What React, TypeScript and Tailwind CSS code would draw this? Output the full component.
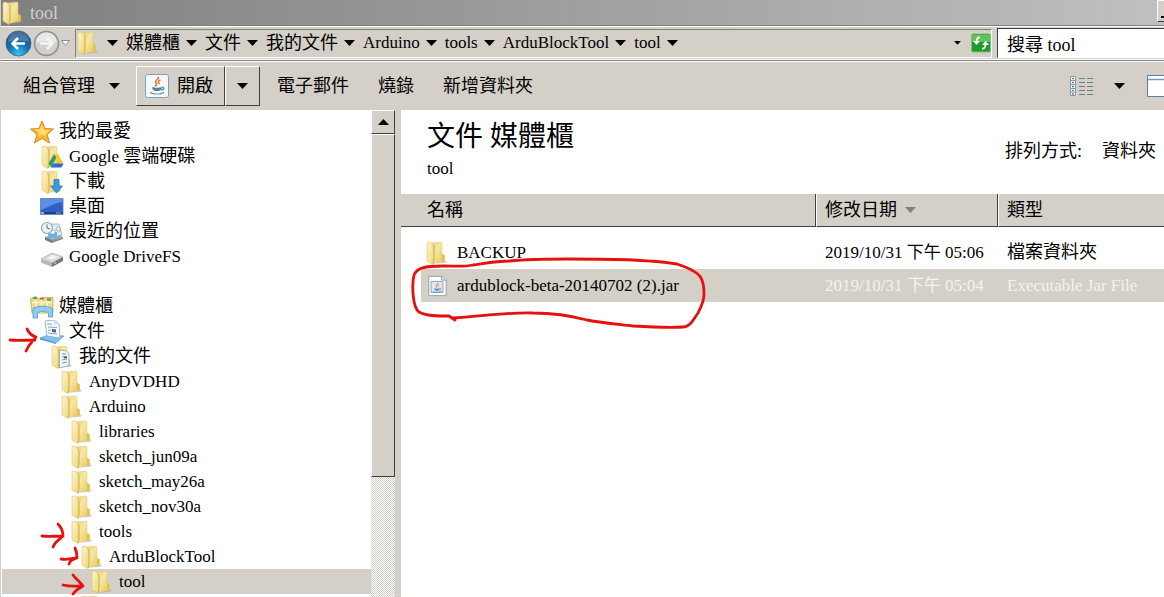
import { useState } from 'react';
import type { ReactNode } from 'react';

type IconName = 'star' | 'gdrive' | 'download' | 'desktop' | 'recent' | 'drive' | 'library' | 'documents' | 'mydocs' | 'folder';

interface TreeNode {
    id: string;
    name: string;
    icon: IconName;
    level: number;
}

interface FileRow {
    name: string;
    modified: string;
    type: string;
    isFolder: boolean;
}

const favorites: TreeNode[] = [
    { id: 'fav', name: '我的最愛', icon: 'star', level: 0 },
    { id: 'gdrive', name: 'Google 雲端硬碟', icon: 'gdrive', level: 1 },
    { id: 'downloads', name: '下載', icon: 'download', level: 1 },
    { id: 'desktop', name: '桌面', icon: 'desktop', level: 1 },
    { id: 'recent', name: '最近的位置', icon: 'recent', level: 1 },
    { id: 'drivefs', name: 'Google DriveFS', icon: 'drive', level: 1 },
];

const libraries: TreeNode[] = [
    { id: 'lib', name: '媒體櫃', icon: 'library', level: 0 },
    { id: 'docs', name: '文件', icon: 'documents', level: 1 },
    { id: 'mydocs', name: '我的文件', icon: 'mydocs', level: 2 },
    { id: 'anydvd', name: 'AnyDVDHD', icon: 'folder', level: 3 },
    { id: 'arduino', name: 'Arduino', icon: 'folder', level: 3 },
    { id: 'libraries', name: 'libraries', icon: 'folder', level: 4 },
    { id: 'jun09a', name: 'sketch_jun09a', icon: 'folder', level: 4 },
    { id: 'may26a', name: 'sketch_may26a', icon: 'folder', level: 4 },
    { id: 'nov30a', name: 'sketch_nov30a', icon: 'folder', level: 4 },
    { id: 'tools', name: 'tools', icon: 'folder', level: 4 },
    { id: 'ablock', name: 'ArduBlockTool', icon: 'folder', level: 5 },
    { id: 'tool', name: 'tool', icon: 'folder', level: 6 },
    { id: 'more', name: '', icon: 'folder', level: 5 },
];

const crumbs = ['媒體櫃', '文件', '我的文件', 'Arduino', 'tools', 'ArduBlockTool', 'tool'];

const files: FileRow[] = [
    { name: 'BACKUP', modified: '2019/10/31 下午 05:06', type: '檔案資料夾', isFolder: true },
    { name: 'ardublock-beta-20140702 (2).jar', modified: '2019/10/31 下午 05:04', type: 'Executable Jar File', isFolder: false },
];

const indent = ['pl-7', 'pl-[38px]', 'pl-12', 'pl-[58px]', 'pl-[68px]', 'pl-[78px]', 'pl-[88px]'];

const raised = 'border border-t-white border-l-white border-r-[#404040] border-b-[#404040] bg-[#d4d0c8]';

// Latin runs are set one size below the Chinese ones
const Label = ({ text }: { text: string }) => (
    <>
        {text.split(/([\u4e00-\u9fff]+)/).filter(Boolean).map((part, i) => (
            <span key={i} className={/[\u4e00-\u9fff]/.test(part) ? 'text-[18px]' : 'text-[17px]'}>{part}</span>
        ))}
    </>
);

const Caret = ({ className = 'w-[11px] text-black' }: { className?: string }) => (
    <svg className={`shrink-0 ${className}`} viewBox="0 0 11 6" fill="currentColor">
        <path d="M0 0h11L5.5 6z" />
    </svg>
);

const Svg = ({ children, className = 'size-6' }: { children: ReactNode; className?: string }) => (
    <svg className={`shrink-0 ${className}`} viewBox="0 0 24 24" fill="none">{children}</svg>
);

// Gradients shared by every folder icon on the page
const FolderDefs = () => (
    <svg className="absolute size-0" aria-hidden="true">
        <defs>
            <linearGradient id="folderFront" x1="0" y1="0" x2="1" y2="1">
                <stop offset="0" stopColor="#fdf6cf" />
                <stop offset="1" stopColor="#efd476" />
            </linearGradient>
            <linearGradient id="folderBack" x1="0" y1="0" x2="1" y2="1">
                <stop offset="0" stopColor="#e6cd76" />
                <stop offset=".4" stopColor="#f7e7a2" />
                <stop offset="1" stopColor="#e5c65a" />
            </linearGradient>
        </defs>
    </svg>
);

const FolderShape = () => (
    <>
        <path d="M9 22.500l9-4.500 4 2.500-2 1.500z" fill="#9a9a96" opacity=".45" />
        <path d="M6 2l10-1 1 1v11l2.500 1.500V20L8 22.500z" fill="url(#folderBack)" stroke="#e0c770" strokeWidth=".5" />
        <path d="M17 13l2.500 1.500V20l-2.500.5z" fill="#e3c14f" />
        <path d="M2 1.500L5 1l3 2.500c.8 1 1 2 1 3.500v12l-1 4.500-6-3.500z" fill="url(#folderFront)" stroke="#dcc36c" strokeWidth=".6" />
        <path d="M8 4c1 1.500 1 3 1 5v10l-1 4" stroke="#c9a94a" strokeWidth=".8" />
    </>
);

const TreeIcon = ({ name }: { name: IconName }) => {
    switch (name) {
        case 'star':
            return (
                <Svg>
                    <path d="M12 1l3 7.500 8.500.5-6.500 5.500 2.500 8.500-7.500-4.500L4.500 23l2.500-8.500L.5 9 9 8.500z" fill="#fdb62b" stroke="#dc861d" strokeLinejoin="round" />
                    <path d="M12 4l2 6 6 .2-5 4 1 3-4-3-4 2 1-4-5-3 6-.3z" fill="#ffe58a" opacity=".8" />
                </Svg>
            );
        case 'gdrive':
            return (
                <Svg>
                    <FolderShape />
                    <path d="M14 9h4l5.500 9.500H19z" fill="#f9c62c" />
                    <path d="M14 9l2.300 4L11 22l-2.500-3.500z" fill="#2f9e58" />
                    <path d="M13 18.500h10.500L21.500 22.500H11z" fill="#2b6fd0" />
                </Svg>
            );
        case 'download':
            return (
                <Svg>
                    <FolderShape />
                    <path d="M14 9.500h5v6.500h3.500l-6 7-6-7H14z" fill="#3b9be0" stroke="#1f6fb5" strokeWidth=".7" />
                </Svg>
            );
        case 'desktop':
            return (
                <Svg>
                    <path d="M.5 3.500h22.500v16H.5z" fill="#2f5fc4" stroke="#6f88b8" />
                    <path d="M1 4h21.500v3C14 8 9 12 1 15z" fill="#5c8fe6" />
                    <path d="M1 17h21.500v2H1z" fill="#1e3f88" />
                    <path d="M1 17h3v2H1zM16 17.500h5v1h-5z" fill="#7db7e8" />
                </Svg>
            );
        case 'recent':
            return (
                <Svg>
                    <path d="M5 17l12-4 6 4-11 6z" fill="#a9b1b8" />
                    <path d="M5 17l7 3v3l-7-3z" fill="#737b83" />
                    <path d="M12 20l11-3v2l-11 4z" fill="#8b949c" />
                    <path d="M9 4h10l3 11-13 3z" fill="#dcecf7" stroke="#8ca4b5" strokeWidth=".7" />
                    <path d="M8 12h9v6H8z" fill="#66b6e4" />
                    <path d="M10 10h5v4h-5zM17 7h3v4h-3z" fill="#fff" stroke="#6d93ac" strokeWidth=".6" />
                    <circle cx="7" cy="8" r="5.500" fill="#edf2f5" stroke="#9aa6ae" strokeWidth="1.200" />
                    <path d="M7 4.500V8l3 1" stroke="#58697a" />
                </Svg>
            );
        case 'drive':
            return (
                <Svg>
                    <path d="M1 14l11-6 11 4-11 6z" fill="#d9dadb" stroke="#9b9d9f" strokeWidth=".6" />
                    <path d="M1 14l11 4v4L1 17.500z" fill="#b4b6b8" />
                    <path d="M12 18l11-6v4l-11 6z" fill="#77797b" />
                    <path d="M7 13l6-3 5 2-6 3z" fill="#f3f3f3" />
                    <path d="M14 18.500l2-1" stroke="#8ade5a" strokeWidth="1.500" />
                </Svg>
            );
        case 'library':
            return (
                <Svg>
                    <path d="M.5 4l5-2.500 3 2h4l1-1h9.500V18H2z" fill="#f1d78b" stroke="#c9a650" strokeWidth=".8" />
                    <path d="M2 7.500h20M6 5v13M11.500 5v13M17 5v13" stroke="#fff5c8" strokeWidth="1.500" />
                    <path d="M3 2h4v2H3z" fill="#4caa48" />
                    <path d="M10 2.500h4v2h-4z" fill="#d95b3b" />
                    <path d="M17 3.500h4v2h-4z" fill="#3f9b50" />
                    <path d="M3 13.500c5-3 14-3 19.500 0V22h-4v-4c-3-2-8-2-11 0v5H3z" fill="#8fcdf0" stroke="#4e9cca" strokeWidth=".8" />
                </Svg>
            );
        case 'documents':
            return (
                <Svg>
                    <path d="M0 18l8-3 16 1-8 7z" fill="#7fc2ea" stroke="#4f9bc9" strokeWidth=".7" />
                    <path d="M0 18l16 5v1L0 19.500z" fill="#4a93c4" />
                    <path d="M5 1l9-1 5 4 1 14-13-2z" fill="#f6fafd" stroke="#8aa5bb" strokeWidth=".8" />
                    <path d="M14 0v4.500l5-.5z" fill="#cfdfec" />
                    <path d="M7 4l5 .2M8 7l9 .5M8 10l3 .3M8 13l9 1" stroke="#8ba4b7" />
                    <path d="M12 9l4 .5v3l-4-.5z" fill="#3568a6" />
                </Svg>
            );
        case 'mydocs':
            return (
                <Svg>
                    <FolderShape />
                    <path d="M9.500 5l7 1 2.500 3v11.500l-9.500 2.500z" fill="#f2f7fb" stroke="#8aa0b4" strokeWidth=".8" />
                    <path d="M12 9h4M12 12l5-.5M12 15l5-1M12 18l5-1" stroke="#7c95aa" />
                    <path d="M14 11.500l3-.3v2l-3 .4z" fill="#3568a6" />
                </Svg>
            );
        default:
            return <Svg><FolderShape /></Svg>;
    }
};

const JavaCup = () => (
    <>
        <path d="M13 3c2 2-4 3-2 6 1 1.500 1 2-1 3M15.500 6c-3 1-2 3-1 4" stroke="#e5762d" strokeWidth="1.500" />
        <path d="M7 13c2 1 8 1 10 0-.5 3-1.500 4-5 4s-4.500-1-5-4z" fill="#5382a1" />
        <path d="M17 13c3 0 2 3-1 3M5 18.500c4 2 10 2 14 0" stroke="#5382a1" strokeWidth="1.200" />
    </>
);

const JarIcon = () => (
    <Svg className="size-[22px]">
        <path d="M3 1.500h14l5 4V22.500H3z" fill="#fff" stroke="#8b9aa8" />
        <path d="M17 1.500v4h5" fill="#e3ebf2" stroke="#8b9aa8" />
        <path d="M5.500 7h13v12h-13z" fill="#dfe8f1" stroke="#7e9dbb" />
        <g transform="translate(4.500 6.500) scale(.62)"><JavaCup /></g>
    </Svg>
);

const TreeItem = ({ node, selected, onSelect }: { node: TreeNode; selected: boolean; onSelect: () => void }) => (
    <li>
        <button
            type="button"
            onClick={onSelect}
            aria-label={node.name || 'folder'}
            className={`flex h-[25px] w-full items-center gap-[5px] text-left ${indent[node.level]} ${selected ? 'bg-[#d4d0c8]' : ''}`}
        >
            <TreeIcon name={node.icon} />
            <span className="whitespace-nowrap leading-6"><Label text={node.name} /></span>
        </button>
    </li>
);

const TitleBar = () => (
    <header className="flex h-[25px] shrink-0 items-center gap-[5px] bg-linear-to-r from-[#808080] to-[#c0c0c0]">
        <Svg className="size-6"><FolderShape /></Svg>
        <h1 className="text-[18px] leading-6 text-[#d4d0c8]">tool</h1>
        <button type="button" aria-label="minimize" className={`ml-auto flex h-[22px] w-[7px] items-end justify-end self-start pb-[3px] ${raised} border-r-0`}>
            <span className="h-[2px] w-[3px] bg-black" />
        </button>
    </header>
);

const AddressBar = () => (
    <nav className="flex h-9 shrink-0 items-center border-y border-t-[#808080] border-b-[#808080] pl-1 shadow-[inset_0_1px_0_#fff,inset_0_-1px_0_#fff]">
        <button type="button" aria-label="back">
            <svg className="size-[27px]" viewBox="0 0 27 27" fill="none">
                <defs>
                    <radialGradient id="back" cx=".5" cy=".95" r=".9">
                        <stop offset="0" stopColor="#35c8f5" />
                        <stop offset=".5" stopColor="#1273b8" />
                        <stop offset="1" stopColor="#1c4276" />
                    </radialGradient>
                </defs>
                <circle cx="13.500" cy="13.500" r="12.500" fill="url(#back)" stroke="#506a86" />
                <path d="M3 12a10.500 10.500 0 0 1 21 0c-6-2-15-2-21 0z" fill="#fff" opacity=".22" />
                <path d="M20 13.500H8M13 8l-5.500 5.500L13 19" stroke="#fff" strokeWidth="2.600" />
            </svg>
        </button>
        <button type="button" aria-label="forward" className="ml-px">
            <svg className="size-[27px]" viewBox="0 0 27 27" fill="none">
                <circle cx="13.500" cy="13.500" r="12" fill="#d0d0ce" stroke="#8e8e8c" strokeWidth="1.500" />
                <path d="M3 13a10.500 10.500 0 0 1 21 0c-6-2-15-2-21 0z" fill="#fff" opacity=".5" />
                <path d="M7 13.500h12M14 8l5.500 5.500L14 19" stroke="#f4f4f3" strokeWidth="2.600" />
            </svg>
        </button>
        <button type="button" aria-label="history" className="ml-px">
            <svg className="w-[9px]" viewBox="0 0 9 6"><path d="M.5.5h8L4.500 5.500z" fill="#fff" stroke="#7c8fa0" /></svg>
        </button>
        <div className="ml-[5px] flex h-[29px] min-w-0 flex-1 items-center border border-t-[#808080] border-l-[#808080] border-r-white border-b-white">
            <TreeIcon name="folder" />
            <Caret className="mr-2 ml-[7px] w-[11px] text-black" />
            {crumbs.map(name => (
                <button key={name} type="button" className="mr-2 flex items-center gap-[6px] whitespace-nowrap leading-6">
                    <span><Label text={name} /></span>
                    <Caret />
                </button>
            ))}
            <Caret className="ml-auto mr-[10px] w-[7px] text-black" />
            <button type="button" aria-label="refresh">
                <svg className="size-5" viewBox="0 0 20 20" fill="none">
                    <rect x=".5" y="1" width="19" height="18" rx="1.500" fill="#1f9a2b" stroke="#7dbd7e" />
                    <path d="M1 2h18v7H1z" fill="#74d06c" opacity=".75" />
                    <path d="M9 4.500C6.500 4 5.500 6 5.500 9M11 15.500c2.500.5 3.500-1.500 3.500-4.500" stroke="#fff" strokeWidth="1.800" />
                    <path d="M2 8h7l-3.500 4zM11 12h7l-3.500-4z" fill="#fff" />
                </svg>
            </button>
        </div>
        <input
            aria-label="search"
            defaultValue="搜尋 tool"
            className="ml-[5px] h-[30px] w-[167px] shrink-0 border border-t-[#404040] border-l-[#404040] border-r-0 border-b-white bg-white pl-[9px] text-[18px] leading-6 outline-none"
        />
    </nav>
);

const Toolbar = () => (
    <div className="flex h-12 shrink-0 items-center overflow-hidden whitespace-nowrap border-t border-white pl-[22px] text-[18px] leading-6">
        <button type="button" className="flex items-center gap-[14px]">組合管理<Caret /></button>
        <button type="button" className={`ml-4 flex h-10 w-[89px] items-center gap-2 pl-2 ${raised}`}>
            <Svg className="size-6">
                <rect x=".5" y=".5" width="23" height="23" rx="2" fill="#f4f8fb" stroke="#7ea1c0" />
                <JavaCup />
            </Svg>
            開啟
        </button>
        <button type="button" aria-label="open with" className={`flex h-10 w-[35px] items-center justify-center ${raised}`}><Caret /></button>
        <button type="button" className="ml-[17px]">電子郵件</button>
        <button type="button" className="ml-[29px]">燒錄</button>
        <button type="button" className="ml-[29px]">新增資料夾</button>
        <button type="button" aria-label="view" className="ml-auto flex items-center gap-5">
            <svg className="size-6" viewBox="0 0 24 24" fill="none">
                <path d="M.5 2.500h5v19h-5zM.5 6.500h5M.5 10.500h5M.5 14.500h5M.5 18h5" fill="#fff" stroke="#8298a8" />
                <path d="M2 4.500h2M2 16.500h2" stroke="#58a84e" strokeWidth="1.500" />
                <path d="M2 8.500h2M2 20h2" stroke="#d05468" strokeWidth="1.500" />
                <path d="M2 12.500h2" stroke="#4474b8" strokeWidth="1.500" />
                <path d="M9 4.500h6M17 4.500h6M9 8.500h6M17 8.500h6M9 12.500h6M17 12.500h6M9 16.500h6M17 16.500h6M9 20.500h6M17 20.500h6" stroke="#6e7f8e" />
            </svg>
            <Caret />
        </button>
        <button type="button" aria-label="preview pane" className="ml-[22px]">
            <svg className="h-[22px] w-[17px]" viewBox="0 0 17 22" fill="none">
                <path d="M17 .5H.5v21H17" fill="#fff" stroke="#5f7ea6" />
                <path d="M1 4.500h16" stroke="#6f95cf" strokeWidth="1.500" />
            </svg>
        </button>
    </div>
);

const ScrollBar = () => (
    <div className="flex w-6 shrink-0 flex-col bg-[repeating-conic-gradient(#d4d0c8_0_25%,#fff_0_50%)] bg-[length:2px_2px]">
        <button type="button" aria-label="scroll up" className={`flex h-6 shrink-0 items-center justify-center ${raised}`}>
            <Caret className="w-[11px] rotate-180 text-black" />
        </button>
        <div className="min-h-0 flex-1">
            <div className={`h-[74%] ${raised}`} />
        </div>
    </div>
);

const FileTable = () => (
    <table className="w-full table-fixed border-separate border-spacing-0 whitespace-nowrap text-left">
        <colgroup>
            <col className="w-[415px]" />
            <col className="w-[182px]" />
            <col />
        </colgroup>
        <thead>
            <tr className="h-[33px] bg-[#d4d0c8] text-[18px] leading-6">
                <th className="border-r border-b border-[#404040] pl-[26px] font-normal">名稱</th>
                <th className="border-l border-r border-b border-l-white border-r-[#404040] border-b-[#404040] pl-2 font-normal">
                    <button type="button" className="flex items-center gap-2">修改日期<Caret className="w-[11px] text-[#808080]" /></button>
                </th>
                <th className="border-l border-b border-l-white border-b-[#404040] pl-2 font-normal">類型</th>
            </tr>
        </thead>
        <tbody className="leading-6 before:block before:h-[9px]">
            {files.map(file => {
                const shade = file.isFolder ? '' : 'bg-[#d4d0c8]';
                const muted = file.isFolder ? '' : 'bg-[#d4d0c8] text-[#f4f2ee]';
                return (
                    <tr key={file.name} className="h-[33px]">
                        <td className="p-0 pl-5">
                            <div className={`flex h-[33px] items-center gap-2 pl-1 ${shade}`}>
                                <span className="flex w-6 justify-center">
                                    {file.isFolder ? <TreeIcon name="folder" /> : <JarIcon />}
                                </span>
                                <span className="text-[17px]">{file.name}</span>
                            </div>
                        </td>
                        <td className={`p-0 pl-[9px] text-[17px] ${muted}`}>{file.modified}</td>
                        <td className={`p-0 pl-[9px] ${muted}`}><Label text={file.type} /></td>
                    </tr>
                );
            })}
        </tbody>
    </table>
);

// Hand drawn marks over the tree and the jar file
const Marks = () => (
    <svg className="pointer-events-none absolute top-0 -left-px h-[597px] w-[720px]" viewBox="0 0 720 597" fill="none" stroke="#e8100c" strokeLinecap="round" strokeLinejoin="round" strokeWidth="2.800">
        <path d="M455 320l-6-4c-12 0-23 0-30-4-7-5-7-29-5-37 3-7 10-9 29-9 14 0 20 1 30-1 14-2 24-4 37-4 20-2 38-2 57-2 24 0 48 0 66 1 18 1 32 2 44 4 12 4 21 8 24 14 3 5 3 10 3 16 0 8-3 13-6 19-5 7-8 14-15 14-16 1-33 0-50-1-17-2-30-3-46-6-15-4-30-7-54-7-24-1-50 3-80 5" />
        <path d="M10 340c9 1 16 0 25 0M27 329c2 4 5 7 9 8-3 4-7 7-10 14" />
        <path d="M42 536c8 1 13 0 21 0M58 524c4 4 5 8 5 12-3 4-8 5-10 11" />
        <path d="M61 559c6 1 10 0 15-1M75 548c2 4 2 7 2 10-3 1-7 2-8 6" />
        <path d="M63 585c8 2 12 1 19 1M73 575c3 4 7 7 10 11-4 2-7 4-10 8" />
    </svg>
);

const App = () => {
    const [selected, setSelected] = useState('tool');

    return (
        <div className="relative flex h-screen flex-col overflow-hidden border-l border-[#d4d0c8] bg-[#d4d0c8] font-['Liberation_Serif','Noto_Sans_CJK_TC',serif] text-black">
            <FolderDefs />
            <TitleBar />
            <AddressBar />
            <Toolbar />
            <div className="flex min-h-0 flex-1 pt-px">
                <aside className="flex w-[394px] shrink-0">
                    <div className="min-w-0 flex-1 overflow-hidden bg-white pt-[9px] pl-px">
                        {[favorites, libraries].map((group, i) => (
                            <ul key={i} className="mb-[25px]">
                                {group.map(node => (
                                    <TreeItem key={node.id} node={node} selected={selected === node.id} onSelect={() => setSelected(node.id)} />
                                ))}
                            </ul>
                        ))}
                    </div>
                    <ScrollBar />
                </aside>
                <main className="ml-[6px] min-w-0 flex-1 overflow-hidden bg-white">
                    <div className="flex h-[84px] justify-between pr-2 pl-[26px]">
                        <div className="pt-[7px]">
                            <h2 className="text-[28px] leading-10">文件 媒體櫃</h2>
                            <p className="text-[17px] leading-6">tool</p>
                        </div>
                        <div className="flex gap-5 pt-[29px] text-[18px] leading-6">
                            <span>排列方式:</span>
                            <button type="button" className="self-start">資料夾</button>
                        </div>
                    </div>
                    <FileTable />
                </main>
            </div>
            <Marks />
        </div>
    );
};

export default App;
